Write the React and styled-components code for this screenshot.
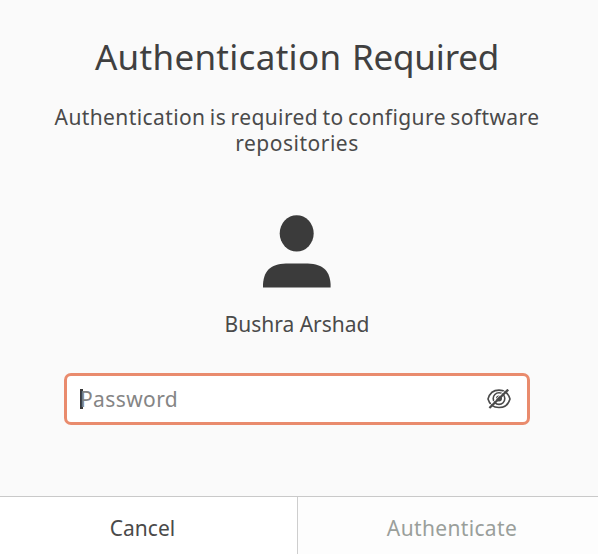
import React from "react";
import styled, { createGlobalStyle } from "styled-components";

const GlobalStyle = createGlobalStyle`
  * {
    box-sizing: border-box;
  }
  body {
    margin: 0;
    background-color: #fafafa;
    color: #4a4a4a;
    font-family: "Noto Sans", "Open Sans", sans-serif;
  }
`;

const IconUser = () => (
  <svg width="68" height="73" viewBox="0 0 68 73" fill="#3b3b3b">
    <ellipse cx="33.7" cy="18.4" rx="17" ry="18.2" />
    <path d="M0 72.5V69C1 54 9 48.4 26 48.4H41.6C58.6 48.4 66.6 54 67.6 69V72.5Z" />
  </svg>
);

const IconHidden = () => (
  <svg width="24" height="20" viewBox="0 0 24 20" fill="none" stroke="#4a4a4a">
    <path
      d="M1 10C2.6 4.2 6.6 1.1 12 1.1S21.4 4.2 23 10C21.4 15.6 17.4 18.5 12 18.5S2.6 15.6 1 10Z"
      strokeWidth="1.6"
    />
    <circle cx="12" cy="9.6" r="5.8" strokeWidth="1.6" />
    <circle cx="12" cy="9.6" r="3" fill="#4a4a4a" stroke="none" />
    <path d="M1.4 17.8L19.8 -0.4" stroke="#fff" strokeWidth="1" />
    <path d="M2.4 19L21.2 0.6" strokeWidth="2.3" />
  </svg>
);

const App = () => {
  return (
    <Dialog>
      <GlobalStyle />
      <Content>
        <Title>
          <Text $spacing="0.3px">Authentication</Text>{" "}
          <Text $spacing="-0.2px">Required</Text>
        </Title>
        <Message>
          <Text $spacing="0.4px">
            Authentication is required to configure software
          </Text>
          <br />
          <Text $spacing="0.5px">repositories</Text>
        </Message>
        <IconUser />
        <UserName>Bushra Arshad</UserName>
        <Field>
          <Caret />
          <Placeholder>Password</Placeholder>
          <IconHidden />
        </Field>
      </Content>
      <Actions>
        <Button>Cancel</Button>
        <Button disabled>Authenticate</Button>
      </Actions>
    </Dialog>
  );
};

const Dialog = styled.div`
  display: flex;
  flex-direction: column;
  width: 598px;
  height: 554px;
  overflow: hidden;
`;

const Content = styled.div`
  flex: 1;
  display: flex;
  flex-direction: column;
  align-items: center;
  padding: 32px 4px 0 0;
`;

const Title = styled.h1`
  margin: 0;
  font-weight: 400;
  font-size: 35px;
  line-height: 50px;
  white-space: nowrap;
  word-spacing: 1.5px;
  color: #404040;
`;

const Message = styled.p`
  margin: 22px 0 59px;
  font-size: 21px;
  line-height: 26px;
  text-align: center;
  white-space: nowrap;
  word-spacing: -1.5px;
`;

const Text = styled.span`
  letter-spacing: ${({ $spacing }) => $spacing};
`;

const UserName = styled.div`
  margin: 22px 0 35px;
  font-size: 21px;
  line-height: 28px;
`;

const Field = styled.div`
  display: flex;
  align-items: center;
  width: 466px;
  height: 52px;
  padding: 0 16px 0 13px;
  border: 3px solid #e98b6d;
  border-radius: 7px;
  background-color: #fff;
`;

const Caret = styled.span`
  width: 3px;
  height: 20px;
  margin-right: -3px;
  background-color: #3a3a3a;
`;

const Placeholder = styled.span`
  flex: 1;
  font-size: 21px;
  line-height: 28px;
  letter-spacing: 0.4px;
  color: #858585;
`;

const Actions = styled.div`
  display: grid;
  grid-template-columns: 298px 300px;
  height: 58px;
  border-top: 1px solid #c9c9c9;
`;

const Button = styled.button`
  padding: 5px 12px 0 0;
  border: none;
  background-color: #fff;
  color: #4a4a4a;
  font-family: inherit;
  font-size: 21px;
  line-height: 28px;

  &:first-child {
    border-right: 1px solid #cecece;
  }
  &:disabled {
    padding: 5px 0 0 8px;
    background-color: #fdfdfd;
    color: #9a9f9b;
    letter-spacing: 0.35px;
  }
`;

export default App;
